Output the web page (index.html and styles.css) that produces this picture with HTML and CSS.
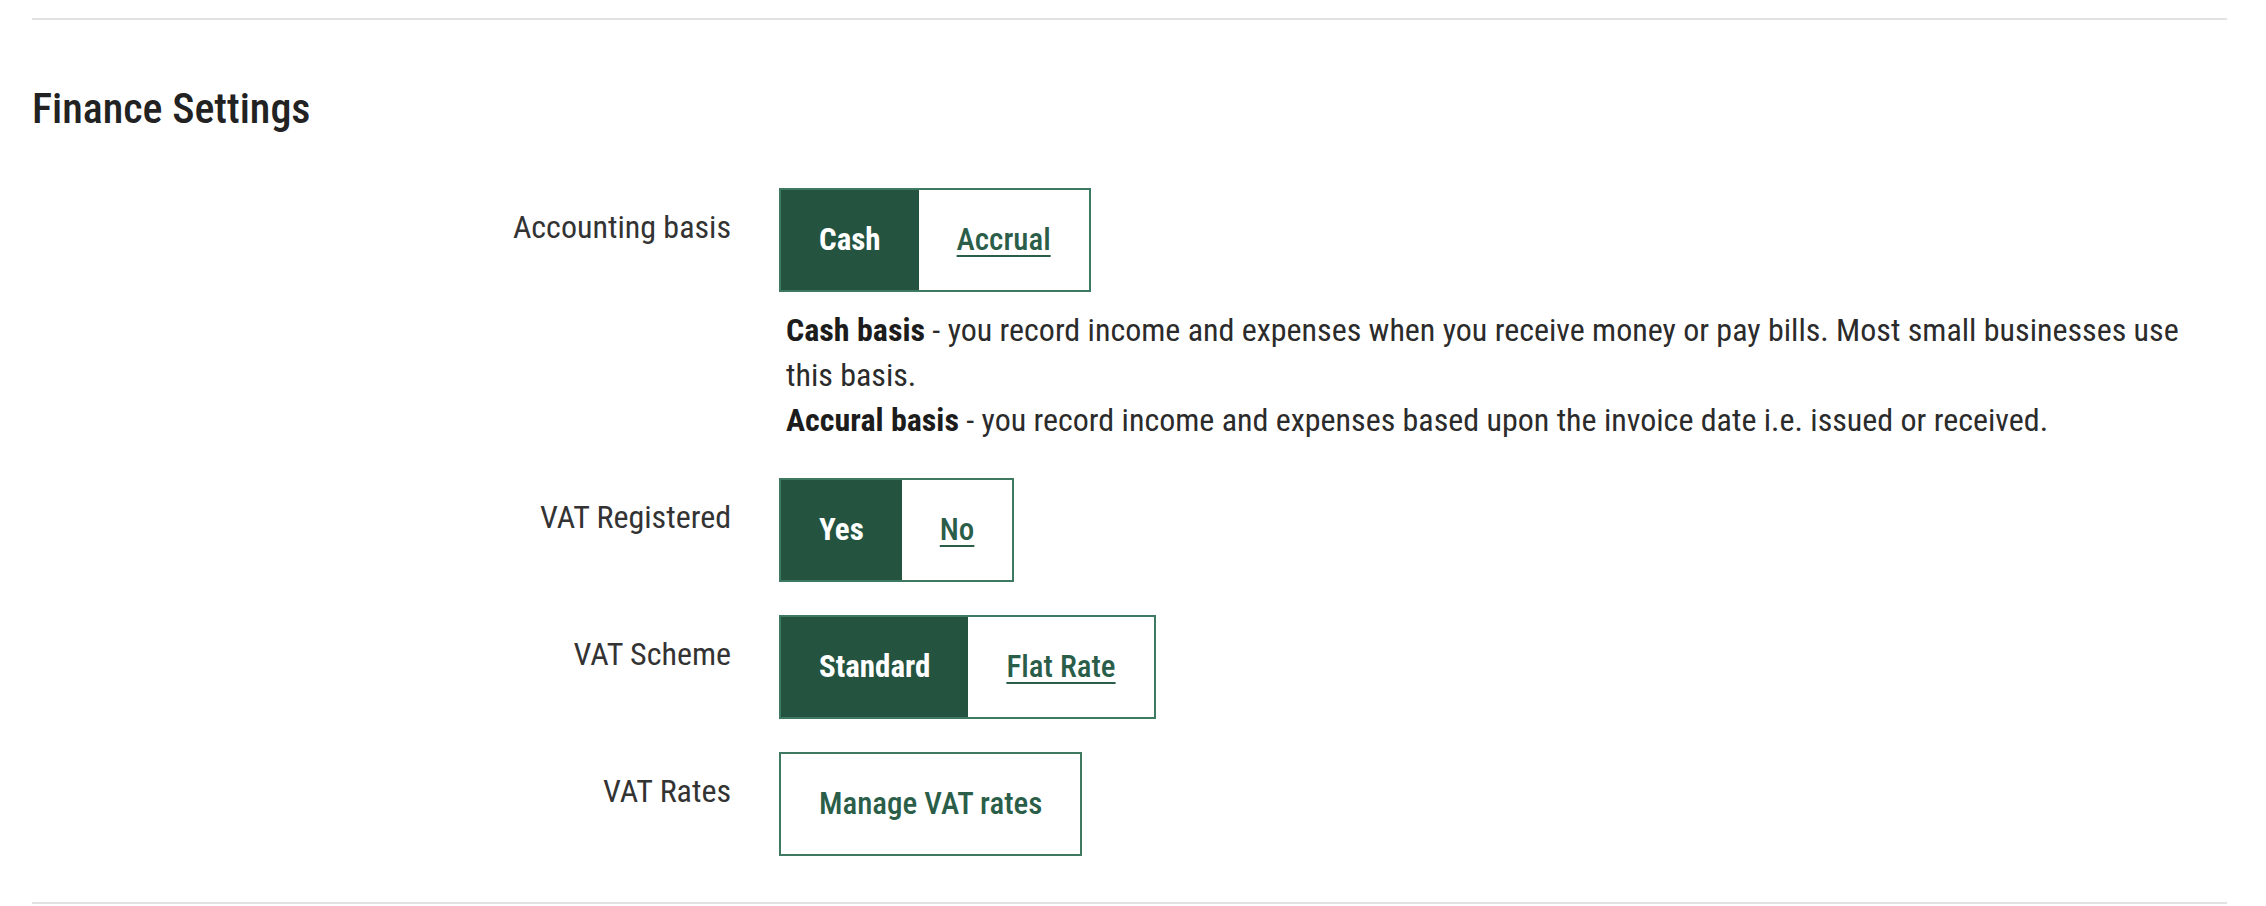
FILE: index.html
```html
<!DOCTYPE html>
<html lang="en">
  <head>
    <meta charset="UTF-8" />
    <meta name="viewport" content="width=device-width, initial-scale=1.0" />
    <title>Finance Settings</title>
    <link rel="stylesheet" href="styles.css">
  </head>
  <body>
    <div class="panel">
      <hr class="rule" />
      <h2 class="section-title">Finance Settings</h2>

      <div class="settings">
        <div class="label">Accounting basis</div>
        <div class="control">
          <div class="toggle">
            <span class="opt active">Cash</span>
            <a class="opt" href="#">Accrual</a>
          </div>
          <p class="help">
            <b>Cash basis</b> - you record income and expenses when you receive money or pay bills. Most small businesses use this basis.<br />
            <b>Accural basis</b> - you record income and expenses based upon the invoice date i.e. issued or received.
          </p>
        </div>

        <div class="label">VAT Registered</div>
        <div class="control">
          <div class="toggle">
            <span class="opt active">Yes</span>
            <a class="opt" href="#">No</a>
          </div>
        </div>

        <div class="label">VAT Scheme</div>
        <div class="control">
          <div class="toggle">
            <span class="opt active">Standard</span>
            <a class="opt" href="#">Flat Rate</a>
          </div>
        </div>

        <div class="label">VAT Rates</div>
        <div class="control">
          <a class="btn" href="#">Manage VAT rates</a>
        </div>
      </div>

      <hr class="rule" />
    </div>
  </body>
</html>
```

FILE: styles.css
```css
body {
  margin: 0;
  background: #fff;
  color: #2b2b2b;
  font-family: "Roboto Condensed", "DejaVu Sans Condensed", sans-serif;
}

.panel {
  padding: 18px 39px 0 32px;

  .rule {
    margin: 0;
    border: 0;
    height: 2px;
    background: #e2e2e2;
  }
  .section-title {
    margin: 65px 0 55px;
    font-size: 42px;
    line-height: 48px;
    font-weight: 500;
    color: #222;
  }
}

.settings {
  display: grid;
  grid-template-columns: 699px auto;
  column-gap: 48px;
  row-gap: 33px;
  padding-bottom: 46px;

  .label {
    text-align: right;
    font-size: 32px;
    line-height: 45px;
    padding-top: 17px;
    color: #333;
  }
}

.toggle {
  display: inline-flex;
  border: 2px solid #3e7a62;

  .opt {
    padding: 30px 38px;
    font-size: 31px;
    line-height: 40px;
    font-weight: 500;
    color: #2a5e49;
    text-decoration: underline;
    text-underline-offset: 5px;
    text-decoration-thickness: 2px;
  }
  .active {
    background: #24533f;
    color: #fff;
    font-weight: 700;
    text-decoration: none;
  }
}

.btn {
  display: inline-block;
  border: 2px solid #3e7a62;
  padding: 30px 38px;
  font-size: 31px;
  line-height: 40px;
  font-weight: 500;
  color: #2a5e49;
  text-decoration: none;
}

.help {
  margin: 16px 0 2px 7px;
  max-width: 1420px;
  font-size: 32px;
  line-height: 45px;
  color: #2b2b2b;

  b {
    color: #1c1c1c;
  }
}
```
